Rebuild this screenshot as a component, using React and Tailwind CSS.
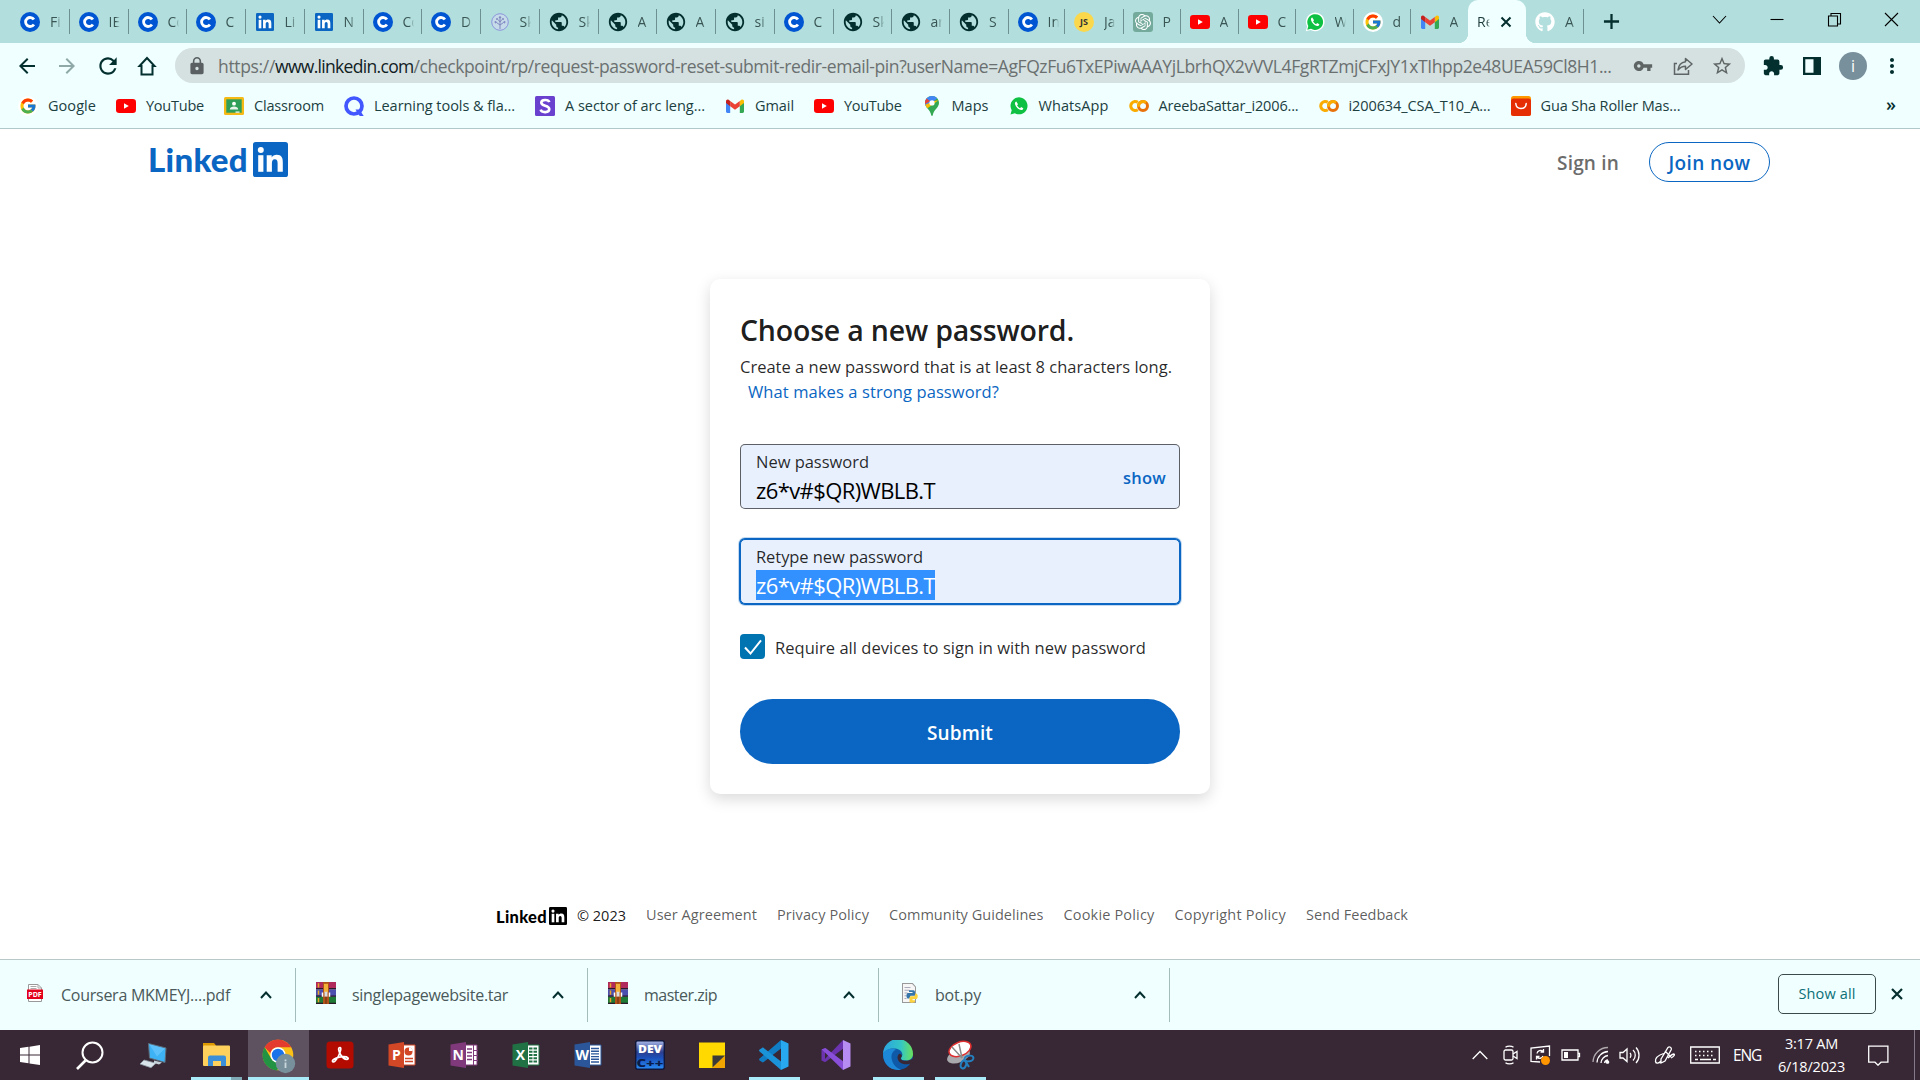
import React, { useLayoutEffect, useRef, useState } from "react";
import { FcGoogle } from "react-icons/fc";
import { FaGithub } from "react-icons/fa";
import { SiOpenai } from "react-icons/si";
import { MdArrowBack, MdArrowForward, MdRefresh, MdLock, MdVpnKey, MdStarBorder, MdExtension, MdMoreVert, MdPublic } from "react-icons/md";

/* Text set to a fixed measure: the tracking is worked out from the natural width. */
function Fit({ w, className = "", children }) {
  const ref = useRef(null);
  const [ls, setLs] = useState(0);
  useLayoutEffect(() => {
    const natural = ref.current.getBoundingClientRect().width;
    setLs((w - natural) / String(children).length);
  }, []);
  return (
    <span className={"inline-block shrink-0 whitespace-pre text-left " + className} style={{ width: w }}>
      <span ref={ref} style={{ letterSpacing: ls }}>{children}</span>
    </span>
  );
}

/* ---------- site icons, all 20px ---------- */
const Coursera = () => (
  <svg viewBox="0 0 20 20" className="size-5"><circle cx="10" cy="10" r="10" fill="#0056d2" /><path d="M13.9 7.6A4.5 4.5 0 1 0 13.9 12.4" fill="none" stroke="#fff" strokeWidth="2.8" /></svg>
);
const InMark = ({ bg = "#0a66c2", fg = "#fff", className = "size-5" }) => (
  <svg viewBox="0 0 35 35" className={className}>
    <rect width="35" height="35" rx="2.6" fill={bg} />
    <g fill={fg}><circle cx="7.8" cy="8" r="3" /><rect x="5.2" y="13.2" width="5.2" height="16.6" />
      <path d="M13.7 13.2h5v2.3c.9-1.6 2.7-2.7 5-2.7 5 0 6.1 3.200 6.100 7.600v9.400h-5.200v-8.300c0-2.200-.4-4.200-2.800-4.200-2.300 0-2.900 1.900-2.900 4.100v8.400h-5.200z" /></g>
  </svg>
);
const LinkedInFav = () => <span className="flex size-5 items-center justify-center"><InMark className="size-[18px]" /></span>;
const Tree = () => (
  <svg viewBox="0 0 20 20" className="size-5"><circle cx="10" cy="10" r="8.300" fill="#c5dbea" stroke="#8d95dc" strokeWidth="1" /><g stroke="#8188bf" fill="none" strokeWidth="1"><path d="M10 17V7M10 13L6.500 10.500M10 13l3.500-2.500M10 10L8 7.500M10 10l2-2.500M6.500 10.500l-1.500 .5M13.500 10.500l1.500 .5" /></g><g fill="#8188bf"><circle cx="10" cy="5.500" r="1.200" /><circle cx="7" cy="7" r="1" /><circle cx="13" cy="7" r="1" /><circle cx="5.500" cy="10" r="1" /><circle cx="14.500" cy="10" r="1" /></g></svg>
);
const Globe = () => <MdPublic className="size-[22px] -m-px text-[#03302f]" />;
const JsIcon = () => (
  <span className="flex size-5 items-center justify-center rounded-full bg-[#fbd84b] font-['Open_Sans'] text-[9px] font-bold text-[#333]">JS</span>
);
const Gpt = () => <span className="flex size-5 items-center justify-center rounded-[3px] bg-[#74aa9c] text-white"><SiOpenai className="size-4" /></span>;
const YouTube = () => (
  <svg viewBox="0 0 20 20" className="size-5"><rect y="3" width="20" height="14" rx="3.200" fill="#f00" /><path d="M8 7.200v5.600l4.800-2.800z" fill="#fff" /></svg>
);
const WhatsApp = () => (
  <span className="flex size-5 items-center justify-center"><svg viewBox="0 0 20 20" className="size-5"><path d="M.8 19.2l1.300-4.700A9.300 9.300 0 1 1 5.600 18z" fill="#fff" /><path d="M2.300 17.700l1-3.700A7.900 7.900 0 1 1 6 16.800z" fill="#0fc143" /><path d="M7.300 5.500c-.9.200-1.600 1.200-1.300 2.600.7 3 3.200 5.300 6 5.900 1.300.2 2.200-.5 2.300-1.800l-2.200-1.100-1 1.100c-1.400-.6-2.300-1.500-3-2.900l.9-1z" fill="#fff" /></svg></span>
);
const WhatsAppMark = () => (
  <svg viewBox="0 0 20 20" className="size-5"><path d="M1.500 18.500l1.200-4.300A8.500 8.500 0 1 1 5.900 17.300z" fill="#0fc143" /><path d="M7.300 5.500c-.9.200-1.600 1.200-1.300 2.600.7 3 3.200 5.300 6 5.900 1.300.2 2.200-.5 2.300-1.800l-2.200-1.100-1 1.100c-1.400-.6-2.300-1.500-3-2.900l.9-1z" fill="#fff" /></svg>
);
const Google = () => <span className="flex size-5 items-center justify-center rounded-full bg-white"><FcGoogle className="size-[18px]" /></span>;
const Gmail = () => (
  <svg viewBox="0 0 20 20" className="size-5"><path d="M1 5v10.500c0 .8.600 1.400 1.400 1.400H5.200V9z" fill="#4285f4" /><path d="M19 5v10.500c0 .8-.6 1.400-1.400 1.400h-2.800V9z" fill="#34a853" /><path d="M14.800 5l1.600-1.200c1.100-.8 2.600 0 2.600 1.400V7l-4.200 3.200z" fill="#fbbc04" /><path d="M5.200 10.200V5L10 8.600 14.800 5v5.200L10 13.800z" fill="#ea4335" /><path d="M1 5.200c0-1.400 1.500-2.200 2.600-1.400L5.200 5v5.200L1 7z" fill="#c5221f" /></svg>
);
const GitHub = () => <FaGithub className="size-5 text-white" />;
const Classroom = () => (
  <svg viewBox="0 0 20 20" className="size-5"><rect y="1" width="20" height="18" rx="1.500" fill="#f5ba15" /><rect x="2.300" y="3.300" width="15.400" height="13.400" fill="#2f9e58" /><circle cx="10" cy="7.700" r="1.900" fill="#fff" /><path d="M5.800 13.500c0-2 2.200-2.900 4.200-2.900s4.200.9 4.200 2.900z" fill="#e8f5ec" /><rect x="11.500" y="15.500" width="4" height="1.200" fill="#fff" /></svg>
);
const Quizlet = () => (
  <svg viewBox="0 0 20 20" className="size-5"><circle cx="10" cy="10" r="8" fill="none" stroke="#4257ff" strokeWidth="3.700" /><path d="M11.500 13.500h4l4.200 6.500h-4z" fill="#4257ff" /></svg>
);
const SIcon = () => (
  <svg viewBox="0 0 20 20" className="size-5"><rect width="20" height="20" rx="1.500" fill="#6a40cf" /><path d="M14.300 6.200C13.400 3.300 6.300 3.200 6.300 6.800c0 3.700 8 2.300 8 6.300 0 3.900-7.600 3.900-8.700.6" fill="none" stroke="#fff" strokeWidth="2.600" /></svg>
);
const Maps = () => (
  <svg viewBox="0 0 20 20" className="size-5"><path d="M10 0C6 0 3 3 3 6.900c0 4.600 5.300 6.700 6.200 12 .2 1.300 1.400 1.300 1.600 0 .9-5.300 6.200-7.400 6.200-12C17 3 14 0 10 0z" fill="#34a853" /><path d="M10 0C6 0 3 3 3 6.900c0 1.900.9 3.400 2 4.700L15.200 2.200A7 7 0 0 0 10 0z" fill="#4285f4" /><path d="M4.700 2.400A6.800 6.800 0 0 0 3 6.900l0 1 5-2.700z" fill="#ea4335" /><path d="M3.200 8.700c.4 1.300 1.200 2.400 2.200 3.600L16.500 4.300 12 5z" fill="#fbbc04" /><circle cx="10" cy="6.900" r="2.600" fill="#fff" /></svg>
);
const Colab = () => (
  <svg viewBox="0 0 20 20" className="size-5" fill="none" strokeWidth="3"><path d="M8.800 6.300a4.500 4.500 0 1 0 0 7.400" stroke="#f9ab00" /><circle cx="14" cy="10" r="4.500" stroke="#e8710a" /><path d="M9.600 10.800A4.500 4.500 0 0 1 17 6.700" stroke="#f9ab00" /></svg>
);
const Ali = () => (
  <svg viewBox="0 0 20 20" className="size-5"><rect width="20" height="20" rx="2.500" fill="#f90" /><rect y="2.500" width="20" height="17.500" rx="2.500" fill="#e62e04" /><path d="M4.800 7.500c.5 6.700 9.900 6.700 10.400 0" fill="none" stroke="#fff" strokeWidth="1.500" strokeLinecap="round" /></svg>
);

/* ---------- tab strip ---------- */
const tabs = [
  [58.5, Coursera, "Fi"], [59, Coursera, "IE"], [58, Coursera, "Co"], [59, Coursera, "C"], [59, LinkedInFav, "Li"], [59, LinkedInFav, "N"],
  [58.5, Coursera, "Co"], [58.5, Coursera, "D"], [59, Tree, "Sk"], [59, Globe, "Sk"], [58, Globe, "A"], [59, Globe, "A"], [59, Globe, "si"],
  [59, Coursera, "C"], [58, Globe, "Sk"], [58.500, Globe, "ar"], [58.500, Globe, "S"], [56.500, Coursera, "In"], [58.500, JsIcon, "Ja"], [57, Gpt, "P"],
  [58, YouTube, "A"], [57, YouTube, "C"], [58, WhatsApp, "W"], [57, Google, "d"], [57.5, Gmail, "A"],
];
const Tab = ({ w, Icon, label, last }) => (
  <div className="flex h-[43px] shrink-0 items-center" style={{ width: w }}>
    <span className="ml-[9px] flex size-5 shrink-0 items-center justify-center"><Icon /></span>
    <span className="ml-[10px] w-[11px] shrink-0 overflow-hidden whitespace-nowrap text-[14px] leading-[20px] text-[#3a5654] [mask-image:linear-gradient(to_right,black_60%,transparent)]">{label}</span>
    <span className={"ml-auto h-[25px] w-px " + (last ? "bg-transparent" : "bg-[#6c9190]")} />
  </div>
);
const Caption = () => (
  <div className="ml-auto flex h-[38px] items-center text-black">
    {[
      <path d="M7 7l6.500 7L20 7" />,
      <path d="M7.500 10.500h13" />,
      <path d="M7.500 7h9v10h-9zM10 7V4.500h9.500v10.500H17" />,
      <path d="M7 4l13 13M20 4L7 17" />,
    ].map((p, i) => (
      <span key={i} className="flex w-[57.300px] justify-center"><svg viewBox="0 0 27 21" className="h-[21px] w-[27px]" fill="none" stroke="currentColor" strokeWidth="1.100">{p}</svg></span>
    ))}
  </div>
);
const TabStrip = () => (
  <div className="flex h-[43px] bg-[#b2dfdd] pl-[11px]">
    {tabs.map(([w, I, t], i) => <Tab key={i} w={w} Icon={I} label={t} last={i === tabs.length - 1} />)}
    <div className="relative flex h-[43px] w-[58px] shrink-0 items-center rounded-t-[10px] bg-[#f0ffff]">
      <span className="absolute -left-[10px] bottom-0 size-[10px] bg-[radial-gradient(circle_at_0_0,#b2dfdd_10px,#f0ffff_10.5px)]" />
      <span className="absolute -right-[10px] bottom-0 size-[10px] bg-[radial-gradient(circle_at_100%_0,#b2dfdd_10px,#f0ffff_10.5px)]" />
      <span className="ml-[9px] w-[13px] overflow-hidden text-[14px] leading-5 text-[#1c3a3a] [mask-image:linear-gradient(to_right,black_75%,transparent)]">Re</span>
      <svg viewBox="0 0 12 12" className="ml-[10px] size-3" stroke="#042f2e" strokeWidth="2"><path d="M1.500 1.500l9 9M10.500 1.500l-9 9" /></svg>
    </div>
    <Tab w={57.5} Icon={GitHub} label="A" />
    <svg viewBox="0 0 18 18" className="ml-[19px] mt-[13px] size-[17px]" stroke="#042f2e" strokeWidth="2.400"><path d="M9 1v16M1 9h16" /></svg>
    <Caption />
  </div>
);

/* ---------- toolbar ---------- */
const Toolbar = () => (
  <div className="flex h-[45px] items-center bg-[#f0ffff] pl-[15px] text-[#03302f]">
    <MdArrowBack className="size-6" />
    <MdArrowForward className="ml-4 size-6 text-[#8fa9a8]" />
    <MdRefresh className="ml-4 size-[26px]" />
    <svg viewBox="0 0 24 24" className="ml-[14px] size-6" fill="none" stroke="currentColor" strokeWidth="2"><path d="M12 4L4.500 12H6.500v8.500h11V12h2z" strokeLinejoin="miter" /></svg>
    <div className="ml-[16px] flex h-[35px] w-[1570px] items-center rounded-full bg-[#d5e0e0] pl-[11px] text-[#5f6565]">
      <MdLock className="h-[22px] w-[22px] shrink-0 scale-90 text-[#5a6061]" />
      <div className="ml-[10px] flex text-[17.500px] leading-[26px] text-[#6a7070]">
        <Fit w={57}>https://</Fit>
        <Fit w={138.500} className="text-[#10201f]">www.linkedin.com</Fit>
        <Fit w={1198}>/checkpoint/rp/request-password-reset-submit-redir-email-pin?userName=AgFQzFu6TxEPiwAAAYjLbrhQX2vVVL4FgRTZmjCFxJY1xTIhpp2e48UEA59Cl8H1...</Fit>
      </div>
      <MdVpnKey className="ml-[21px] size-5" />
      <svg viewBox="0 0 20 20" className="ml-[20px] size-5" fill="none" stroke="currentColor" strokeWidth="1.500"><path d="M4 7.500H1.500v10.700h14V14" /><path d="M12.500 2.500L19 8l-6.500 5.500v-3.200C9 10.300 7 11.500 5 14c.5-4.500 3-7.700 7.500-8.300z" strokeLinejoin="round" /></svg>
      <MdStarBorder className="ml-[18px] size-[22px]" />
    </div>
    <MdExtension className="ml-[17px] size-[22px]" />
    <svg viewBox="0 0 18 18" className="ml-[19px] size-[18px]"><path d="M0 0h18v18H0zM2.300 2.300v13.400h8.200V2.300z" fill="currentColor" fillRule="evenodd" /></svg>
    <span className="ml-[18px] flex size-7 items-center justify-center rounded-full bg-[#78909c] text-[16px] text-white">i</span>
    <MdMoreVert className="ml-[13px] size-6" />
  </div>
);

const bookmarks = [
  [Google, 48, "Google"], [YouTube, 58, "YouTube"], [Classroom, 70, "Classroom"], [Quizlet, 141, "Learning tools & fla..."], [SIcon, 140, "A sector of arc leng..."],
  [Gmail, 39, "Gmail"], [YouTube, 57.5, "YouTube"], [Maps, 37, "Maps"], [WhatsAppMark, 70, "WhatsApp"], [Colab, 140, "AreebaSattar_i2006..."], [Colab, 142, "i200634_CSA_T10_A..."], [Ali, 140, "Gua Sha Roller Mas..."],
];
const Bookmarks = () => (
  <div className="flex h-[41px] items-center gap-5 border-b border-[#b0c9c8] bg-[#f0ffff] pb-1 pl-[18px] pr-[24px] text-[14.500px] leading-5 text-[#1b403f]">
    {bookmarks.map(([I, w, t], i) => (
      <div key={i} className="flex items-center gap-[10px]"><I /><Fit w={w}>{t}</Fit></div>
    ))}
    <span className="-mt-1 ml-auto text-[18px] font-semibold text-[#042f2e]">»</span>
  </div>
);

/* ---------- page ---------- */
const Header = () => (
  <header className="flex h-[66px] items-start pl-[148px] pr-[150px] pt-[13px]">
    <div className="flex h-[35px] items-start gap-[5px] text-[#0a66c2]">
      <Fit w={100} className="-mt-px font-['Lato'] text-[33px] font-black leading-[36px]">Linked</Fit>
      <InMark className="size-[35px]" />
    </div>
    <div className="ml-auto flex h-10 items-center">
      <Fit w={62} className="mt-0.5 text-[19px] font-semibold leading-[26px] text-[#6c6c6c]">Sign in</Fit>
      <span className="ml-[30px] flex h-10 w-[121px] items-center justify-center rounded-full border border-[#0a66c2]"><Fit w={82} className="mt-0.5 text-[19px] font-semibold leading-[26px] text-[#0a66c2]">Join now</Fit></span>
    </div>
  </header>
);
const Card = () => (
  <section className="mx-auto mt-[84px] h-[515px] w-[500px] rounded-[10px] bg-white px-[30px] pt-[30px] text-[16.5px] text-black/85 shadow-[0_5px_15px_rgba(0,0,0,0.15)]">
    <h1 className="h-[42px] text-[28.5px] font-semibold leading-[42px] text-black/90"><Fit w={334}>Choose a new password.</Fit></h1>
    <p className="mt-[3px] h-[25px] leading-[25px]"><Fit w={432}>Create a new password that is at least 8 characters long.</Fit></p>
    <p className="h-[25px] pl-2 leading-[25px] text-[#0a66c2]"><Fit w={251}>What makes a strong password?</Fit></p>
    <div className="mt-10 flex h-[65px] items-center justify-between rounded-[5px] border border-black/60 bg-[#e8f0fe] px-[15px]">
      <div className="mt-px">
        <div className="h-6 leading-6"><Fit w={113}>New password</Fit></div>
        <div className="mt-px h-[30px] text-[22px] leading-[30px] text-black"><Fit w={179}>z6*v#$QR)WBLB.T</Fit></div>
      </div>
      <Fit w={43} className="-mr-0.5 mt-[3px] font-semibold text-[#0a66c2]">show</Fit>
    </div>
    <div className="mt-[30px] h-[65px] rounded-[5px] border border-[#0a66c2] bg-[#e8f0fe] px-[15px] pt-[5px] shadow-[0_0_0_1px_#0a66c2,0_0_0_2px_rgba(10,102,194,0.25)]">
      <div className="h-6 leading-6"><Fit w={167}>Retype new password</Fit></div>
      <div className="mt-px h-[30px] text-[22px] leading-[30px] text-white"><Fit w={179} className="bg-[#3390ff]">z6*v#$QR)WBLB.T</Fit></div>
    </div>
    <div className="mt-[30px] flex h-[25px] items-center">
      <span className="size-[25px] rounded-[4px] bg-[#0073b1]"><svg viewBox="0 0 25 25" className="size-[25px]" fill="none" stroke="#fff" strokeWidth="2"><path d="M5 13.500l5.500 6L21 6.300" /></svg></span>
      <Fit w={371} className="ml-[10px] mt-px leading-[25px]">Require all devices to sign in with new password</Fit>
    </div>
    <button className="mt-10 flex h-[65px] w-full items-center justify-center rounded-full bg-[#0a66c2] pt-[3px] text-[19px] font-semibold text-white"><Fit w={66}>Submit</Fit></button>
  </section>
);
const links = [[111, "User Agreement"], [92, "Privacy Policy"], [154.5, "Community Guidelines"], [91, "Cookie Policy"], [111.5, "Copyright Policy"], [102, "Send Feedback"]];
const Footer = () => (
  <footer className="mt-[104px] flex h-[36px] items-center pl-[496px] text-[14px] leading-5">
    <Fit w={51} className="mt-px font-['Lato'] text-[16.500px] font-black text-black">Linked</Fit>
    <InMark className="ml-[2px] size-[18px]" bg="#000" />
    <Fit w={49} className="-mt-px ml-[10px] text-[14.500px] text-black/90">© 2023</Fit>
    <div className="-mt-[3px] ml-5 flex gap-5 text-[14.500px] text-black/65">{links.map(([w, t]) => <Fit key={t} w={w}>{t}</Fit>)}</div>
  </footer>
);

/* ---------- downloads ---------- */
const Rar = () => (
  <svg viewBox="0 0 20 18" className="ml-[20px] h-[22px] w-5" preserveAspectRatio="none"><rect width="20" height="6" fill="#b02a5b" /><rect y="6" width="20" height="6" fill="#4d4fae" /><rect y="12" width="20" height="6" fill="#1f7a35" /><path d="M0 5.500h20M0 11.500h20M0 17.500h20" stroke="#2a1a2a" strokeWidth="1" /><path d="M2.500 1v3.500M2.500 7v3.500M2.500 13v3.500" stroke="#e8a528" strokeWidth="1.500" /><rect x="7" width="6" height="18" fill="#b0531a" /><path d="M8 1.500h4v7H8z" fill="#f3b13a" /><path d="M6.500 12V8.500M13.500 12V8.500" stroke="#fff" strokeWidth="1.500" /><rect x="8.500" y="8" width="3" height="4" fill="#ddd" /><path d="M10 12v6" stroke="#6a2c10" /></svg>
);
const Pdf = () => (
  <svg viewBox="0 0 16 18" className="ml-[27px] h-[18px] w-4"><path d="M1.500.5h9.500l3.500 3.500v13.500h-13z" fill="#fff" stroke="#999" /><path d="M3.500 2.500h6M3.500 4.500h6M11 .5V4h3.500" stroke="#aaa" fill="none" /><rect y="5.500" width="16" height="9.500" fill="#e3001b" /><text x="8" y="13" textAnchor="middle" fontSize="7" fontWeight="700" fill="#fff" fontFamily="Open Sans">PDF</text></svg>
);
const Py = () => (
  <svg viewBox="0 0 16 18" className="ml-[23px] h-[20px] w-4" preserveAspectRatio="none"><path d="M.5.500h10l3 3v14H.5z" fill="#f6f6f6" stroke="#999" /><path d="M2.500 4h6M2.500 6.500h5M2.500 9h3M2.500 11.500h2M2.500 14h2" stroke="#aab" /><path d="M7 6.500h4.500a1.500 1.500 0 0 1 1.500 1.500v3.500H8.500L7.500 14H5.500c-1.500-1-1.500-4 0-5h5V8H7z" fill="#3776ab" /><path d="M13.500 9.500h1c1.800 1.500 1.500 4 0 5h-4v1H13v1.500c-1.500 1-4.500 1-5.500 0V13l1-1h4z" fill="#fdd23f" /></svg>
);
const Download = ({ Icon, gap, w, label, width }) => (
  <div className="flex h-[54px] shrink-0 items-center border-r border-[#a5bcbc]" style={{ width }}>
    <span className="-mt-1 flex"><Icon /></span>
    <Fit w={w} className={gap + " text-[16px] leading-6 text-[#4a595a]"}>{label}</Fit>
    <svg viewBox="0 0 12 8" className="ml-auto mr-[23px] h-2 w-3" fill="none" stroke="#042f2e" strokeWidth="2"><path d="M1 7l5-5.500L11 7" /></svg>
  </div>
);
const Downloads = () => (
  <div className="flex h-[71px] items-start border-t border-[#b8c8c9] bg-[#f0ffff] pt-2">
    <Download Icon={Pdf} gap="ml-[18px]" w={169} label="Coursera MKMEYJ....pdf" width={296} />
    <Download Icon={Rar} gap="ml-[16px]" w={156} label="singlepagewebsite.tar" width={291.5} />
    <Download Icon={Rar} gap="ml-[16.500px]" w={73} label="master.zip" width={291.5} />
    <Download Icon={Py} gap="ml-[17px]" w={46} label="bot.py" width={291} />
    <div className="ml-auto mr-[17px] mt-[6px] flex items-center">
      <span className="flex h-10 w-[98px] items-center justify-center rounded-[5px] border border-[#3c4a4b]"><Fit w={57} className="text-[14.500px] font-medium leading-5 text-[#0b7078]">Show all</Fit></span>
      <svg viewBox="0 0 12 12" className="ml-[15px] size-3" stroke="#042f2e" strokeWidth="2.200"><path d="M1 1l10 10M11 1L1 11" /></svg>
    </div>
  </div>
);

/* ---------- taskbar ---------- */
const Ico = ({ children, className = "" }) => <svg viewBox="0 0 30 30" className={"size-[30px] " + className}>{children}</svg>;
const Office = ({ c, letter, children }) => (
  <Ico><path d="M16 5h12v20H16z" fill="#fff" stroke={c} strokeWidth="1" />{children}<path d="M1.500 4.500L17 2v26L1.500 25.500z" fill={c} /><text x="9.300" y="20" textAnchor="middle" fontSize="14" fontWeight="700" fill="#fff" fontFamily="Open Sans">{letter}</text></Ico>
);
const apps = [
  { w: "w-[61px]", i: <Ico className="-ml-0.5"><path d="M5 8l8.500-1.200v7.700H5zM14.500 6.700L25 5v9.500H14.500zM5 15.500h8.500v7.700L5 22zM14.500 15.500H25V25l-10.500-1.600z" fill="#fff" /></Ico> },
  { i: <Ico className="-ml-1"><circle cx="17.500" cy="12.500" r="10" fill="none" stroke="#fff" strokeWidth="2" /><path d="M10.500 20.500L2 29" stroke="#fff" strokeWidth="2.600" /></Ico> },
  { i: <Ico className="-ml-px"><path d="M9.500 3.500L27 8l-1 14.500L10.500 18z" fill="#3db2f5" stroke="#5d6b78" strokeWidth="1" /><path d="M10 4l16 4.500-8 8z" fill="#7bd0ff" opacity=".5" /><path d="M5 20l12 3.200-5 4.500L1 24z" fill="#d9e3ea" stroke="#8c9aa5" strokeWidth=".8" /><path d="M15 20.500l8 2-3 2-5-1.500z" fill="#c5d1d9" /></Ico> },
  { w: "w-[63px]", u: "split", i: <Ico className="-ml-0.5"><path d="M2 3h11l2 2.500V9H2z" fill="#dd9a00" /><rect x="2" y="5.500" width="27" height="20.500" rx="1" fill="#fdd15c" /><path d="M7 26V17.500a2 2 0 0 1 2-2h14a2 2 0 0 1 2 2V26h-5v-5h-8v5z" fill="#3b8fd9" /></Ico> },
  { w: "w-[61px]", u: "full", i: <svg viewBox="0 0 34 38" className="mt-[3px] h-[38px] w-[34px]"><circle cx="16" cy="17" r="15.300" fill="#fbc116" /><path d="M2.600 9.200A15.500 15.500 0 0 1 29.400 9.300H16a7.700 7.700 0 0 0-7.500 6z" fill="#e33b2e" /><path d="M2.600 9.200A15.500 15.500 0 0 0 15 32.500l7-12a7.700 7.700 0 0 1-12.700.3z" fill="#229342" /><circle cx="16" cy="17" r="7.700" fill="#fff" /><circle cx="16" cy="17" r="6.200" fill="#1a73e8" /><circle cx="23.500" cy="25.500" r="9.700" fill="#78909c" /><path d="M23.500 21.500v1.800M23.500 24.500v5.500" stroke="#c9d6dc" strokeWidth="1.800" /></svg> },
  { i: <Ico><rect x="1.500" y="1.500" width="27" height="27" rx="3.500" fill="#b30b00" /><path d="M15 7.500c-2.200 0-1.500 3.500.5 7 1.500 2.600 4 4.800 6.300 4.800 2.700 0 1.500-3-4-2.600-4.500.3-11 2.600-10.300 4.700.7 1.900 3.900-.9 6-5.400C15.300 12 16.700 7.500 15 7.500z" fill="none" stroke="#fff" strokeWidth="1.700" /></Ico> },
  { i: <Office c="#d24726" letter="P"><circle cx="21.500" cy="11.500" r="4" fill="#d24726" /><path d="M22 11V7.500A3.500 3.500 0 0 1 25.500 11z" fill="#fff" /><path d="M18 18.500h8M18 21.500h8" stroke="#d24726" strokeWidth="1.600" /></Office> },
  { i: <Office c="#80397b" letter="N"><path d="M18 9h5M18 12.500h5M18 16h5M18 19.500h5" stroke="#80397b" strokeWidth="1.500" /><path d="M24.500 5v20M25 10.500h4M25 15.500h4M25 20.500h4" stroke="#80397b" strokeWidth="1" /></Office> },
  { i: <Office c="#207245" letter="X"><path d="M18 8.500h8M18 11.700h8M18 15h8M18 18.200h8M18 21.500h8" stroke="#207245" strokeWidth="1.900" strokeDasharray="3.500 1" /></Office> },
  { i: <Office c="#2b579a" letter="W"><path d="M18 8.500h8M18 11.200h8M18 13.900h8M18 16.600h8M18 19.300h8M18 22h8" stroke="#2b579a" strokeWidth="1.400" /></Office> },
  { i: <Ico><defs><linearGradient id="dv" x2="0" y2="1"><stop stopColor="#a9b8ea" /><stop offset=".4" stopColor="#2c3f8f" /><stop offset=".6" stopColor="#1c4fb8" /><stop offset="1" stopColor="#2a8cf5" /></linearGradient></defs><rect x=".7" y=".7" width="28.600" height="28.600" rx="2" fill="url(#dv)" stroke="#10173a" strokeWidth="1.400" /><text x="15" y="12.700" textAnchor="middle" fontSize="10.500" fontWeight="800" fill="#fff" fontFamily="Open Sans" textLength="24" lengthAdjust="spacingAndGlyphs">DEV</text><text x="15" y="26.600" textAnchor="middle" fontSize="10.500" fontWeight="800" fill="#0a1c48" fontFamily="Open Sans" textLength="27" lengthAdjust="spacingAndGlyphs">C++</text></Ico> },
  { i: <Ico><path d="M2 2.500h26v25.500H2z" fill="#ffd900" /><path d="M15 28L28 15.500V28z" fill="#f0a500" /><path d="M15.500 27.500V15.500H28z" fill="#3b3a38" /></Ico> },
  { u: "line", i: <Ico><path d="M22 0l7.500 3.500v23L22 30z" fill="#28a8ee" /><path d="M22 0L.6 18.500c-.7.700-.7 1.500 0 2l2.400 1.600c.6.500 1.100.4 1.700 0L22 8.500z" fill="#0f7cc4" /><path d="M22 30L.6 11.500c-.7-.7-.7-1.500 0-2L3 7.900c.6-.5 1.100-.4 1.700 0L22 21.500z" fill="#1b93d8" /></Ico> },
  { i: <Ico><path d="M22 0l7.500 3.500v23L22 30z" fill="#b78cf2" /><path d="M.5 9.500L4 8v14l-3.500-1.500z" fill="#6c33af" /><path d="M22 0v8.800L4.500 22 2 21z" fill="#6c33af" /><path d="M22 30v-8.800L4.500 8 .8 9.500z" fill="#8a4fd8" /></Ico> },
  { u: "line", i: <Ico><defs><linearGradient id="eg" x2="1"><stop stopColor="#2ba3e0" /><stop offset=".6" stopColor="#34c6c5" /><stop offset="1" stopColor="#6be05a" /></linearGradient></defs><circle cx="15" cy="15" r="15" fill="#0f5aa8" /><path d="M0 14A15 15 0 0 1 30 14c0 4-3 6.500-6.500 6.500-4.500 0-6.500-1.500-5-3.500 2-2.500.5-6.500-4-8C9 7.500 2 9.500 0 14z" fill="url(#eg)" /><path d="M.1 13.500C2 9 9 7.500 13 9.500c-4 2-5.500 6-4 10.500 1 4.500 4.500 8.500 9 9.700C7 31.500-.5 23 .1 13.500z" fill="#1d88d8" /><path d="M18.500 17c-2 2 .5 4 5.500 3.700 2.200-.1 4-.9 5.300-2l2 .5-2 6-2.500-1.500c-6 2-12.300-1.200-12.300-6.200 0-1.500.5-2.700 1.500-3.500 1.500-1 3.700 1.200 2.500 3z" fill="#382835" /></Ico> },
  { u: "line", i: <Ico><ellipse cx="13.500" cy="16" rx="12" ry="6.500" transform="rotate(-22 13.500 16)" fill="#a9a9ad" /><ellipse cx="15" cy="9" rx="11.500" ry="6.800" transform="rotate(-22 15 9)" fill="#fff" stroke="#dd2f2f" strokeWidth="1.500" /><path d="M14 4l3 14M7 7l10 11" stroke="#8a8a8a" strokeWidth="1.500" /><g fill="none" stroke="#2480c0" strokeWidth="2"><ellipse cx="24" cy="18.500" rx="4.500" ry="2.800" transform="rotate(-10 24 18.500)" /><ellipse cx="18.500" cy="24.500" rx="2.600" ry="4" transform="rotate(20 18.500 24.500)" /><path d="M19 19l5 8" /></g></Ico> },
];
const TaskApp = ({ i, u, w = "w-[62px]" }) => (
  <div className={"relative flex h-[50px] shrink-0 items-center justify-center " + w + (u === "full" ? " bg-[#5e5160]" : "")}>
    {i}
    {u && <span className={"absolute bottom-0 h-[3px] " + (u === "full" ? "inset-x-0 bg-[#a9ebf9]" : u === "split" ? "left-[6px] w-[51px] border-r-[11px] border-[#7fa9b5] bg-[#a9ebf9]" : "left-[6px] w-[51px] bg-[#a9ebf9]")} />}
  </div>
);
const T = ({ w, ml, children, h = 20 }) => <svg viewBox={`0 0 ${w} ${h}`} width={w} height={h} className="shrink-0" style={{ marginLeft: ml }} fill="none" stroke="#fff" strokeWidth="1.300">{children}</svg>;
const Taskbar = () => (
  <div className="flex h-[50px] items-center overflow-hidden bg-[#382835]">
    {apps.map((a, k) => <TaskApp key={k} {...a} />)}
    <div className="ml-auto flex h-[50px] w-[448px] items-center text-[15.500px] text-white">
      <T w={16} ml={0} h={10}><path d="M.7 9L8 1.500 15.300 9" /></T>
      <T w={16} ml={15}><rect x="1" y="5" width="9" height="10" rx="1.500" /><path d="M10 9l4-2.500v7L10 11M2.500 2.200c2-1.500 6-1.500 8 0M2.500 17.800c2 1.500 6 1.500 8 0" /></T>
      <T w={21} ml={11}><path d="M10 17L1 16.500V3l18.500-2v10M7 8.500a3.500 3.500 0 0 1 6-2M13.500 4v3h-3M13 11a3.500 3.500 0 0 1-6 1M6.500 14.500v-3h3" /><circle cx="15.500" cy="15.500" r="4.500" fill="#ff9500" stroke="none" /></T>
      <T w={20} ml={10}><path d="M1 5h16v10H1z" /><path d="M17 8.500h1.500v3H17" /><path d="M3 7h4v6H3z" fill="#fff" stroke="none" /></T>
      <T w={18} ml={11}><path d="M1 17A15 15 0 0 1 16 2.500" opacity=".6" /><path d="M5 17.500A11.500 11.500 0 0 1 16 6.500M9 18a8 8 0 0 1 7-7.500" /><path d="M12.500 18a4 4 0 0 1 3.500-3" /><circle cx="15.500" cy="17" r="1.200" fill="#fff" /></T>
      <T w={22} ml={9}><path d="M1 7.500h3L8 4v12.500L4 13H1zM11 8c1.200 1.200 1.200 3.500 0 4.700M14 5c3 2.700 3 7.500 0 10.500M17 2.500c4 4 4 11.500 0 15.500" /></T>
      <T w={22} ml={13}><path d="M7 14L14 2.500a2 2 0 0 1 3.300 2L11 16l-4 2zM11 6l6 6M9.500 8.500C5 10 1 13 1.500 16.500c.5 2.500 3.500 2 5.500-.500M14 13c2-2 4-4 6-4 1.500.5-1 3-3 4" /></T>
      <T w={30} ml={14}><path d="M.7 2h28.600v16H.7z" /><path d="M5 6.500h20M5 10.500h20" strokeDasharray="1.500 2.500" /><path d="M5 14.500h3M10 14.500h11M23 14.500h3" /></T>
      <Fit w={28} className="ml-[13px] leading-5">ENG</Fit>
      <div className="-mt-px ml-[17px] flex w-[67px] flex-col items-center text-[14.500px] leading-[23px]"><Fit w={53}>3:17 AM</Fit><Fit w={67}>6/18/2023</Fit></div>
      <T w={21} ml={23} h={21}><path d="M.7 1.200h19.200v16H13l-3 3-3-3H.7z" /></T>
      <span className="ml-auto mr-[5px] h-[50px] w-px bg-[#85798a]" />
    </div>
  </div>
);

export default function App() {
  return (
    <div className="flex h-[1080px] w-[1920px] flex-col overflow-hidden bg-white font-['Open_Sans',sans-serif]">
      <TabStrip />
      <Toolbar />
      <Bookmarks />
      <main className="h-[830px] shrink-0 overflow-hidden bg-white">
        <Header />
        <Card />
        <Footer />
      </main>
      <Downloads />
      <Taskbar />
    </div>
  );
}
